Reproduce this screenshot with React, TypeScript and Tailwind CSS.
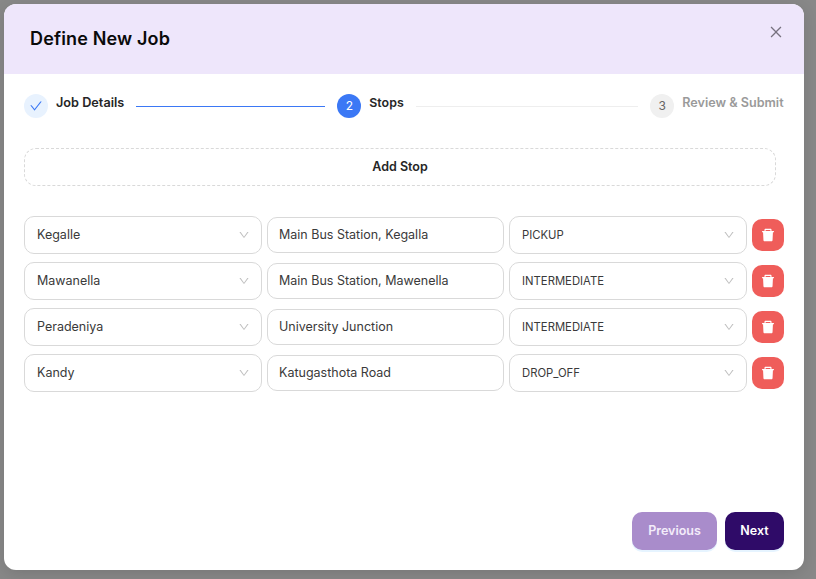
import React from "react";
import { AiFillDelete, AiOutlineCheck, AiOutlineClose, AiOutlineDown } from "react-icons/ai";

const font = "font-['Inter','Noto_Sans',sans-serif]";

const rows = [
  ["Kegalle", "Main Bus Station, Kegalla", "PICKUP"],
  ["Mawanella", "Main Bus Station, Mawenella", "INTERMEDIATE"],
  ["Peradeniya", "University Junction", "INTERMEDIATE"],
  ["Kandy", "Katugasthota Road", "DROP_OFF"],
];

function Select({ value, upper }: { value: string; upper?: boolean }) {
  return (
    <div
      className={`flex h-[38px] w-[238px] shrink-0 items-center justify-between rounded-[10px] border border-[#d9d9d9] bg-white pl-3 pr-[11px] text-[#3a3a3a] ${
        upper ? "text-[11.3px] leading-[20px]" : "text-[12.5px]"
      }`}
    >
      <span>{value}</span>
      <AiOutlineDown className="h-3 w-3 text-[#bfbfbf]" />
    </div>
  );
}

function Row({ row }: { row: string[] }) {
  return (
    <div className="flex h-[38px] items-center gap-[5px]">
      <Select value={row[0]} />
      <div className="flex h-9 w-[237px] shrink-0 items-center rounded-[10px] border border-[#d9d9d9] bg-white px-[11px] text-[12.5px] text-[#3a3a3a]">
        {row[1]}
      </div>
      <Select value={row[2]} upper />
      <button className="flex h-8 w-8 shrink-0 items-center justify-center rounded-[10px] bg-[#ef5d5a] text-white">
        <AiFillDelete className="h-4 w-4" />
      </button>
    </div>
  );
}

export default function App() {
  return (
    <div className={`${font} min-h-[579px] bg-[#888888] pl-1 pt-1`}>
      <div className="relative flex h-[566px] w-[800px] flex-col overflow-hidden rounded-xl bg-white shadow-[0_4px_16px_rgba(0,0,0,0.12)]">
        <header className="flex h-[70px] shrink-0 items-center bg-[#eee6fb] pb-px pl-[26px]">
          <h1 className="text-[18px] font-semibold tracking-[0.15px] text-[#0a0a0a]">Define New Job</h1>
        </header>
        <button className="absolute right-5 top-5 text-[#77727f]">
          <AiOutlineClose className="h-4 w-4" />
        </button>

        <div className="flex flex-1 flex-col px-5 pt-5">
          <div className="flex h-6 items-start">
            <div className="flex h-6 w-6 items-center justify-center rounded-full bg-[#e8f2fe] text-[#3b78f5]">
              <AiOutlineCheck className="h-3.5 w-3.5" />
            </div>
            <span className="ml-2 text-[12.7px] font-semibold leading-[18px] text-[#262626]">Job Details</span>
            <div className="ml-3 mr-3 mt-3 h-px w-[189px] bg-[#3b78f5]" />
            <div className="flex h-6 w-6 items-center justify-center rounded-full bg-[#3b78f5] text-[12px] text-white">2</div>
            <span className="ml-2 w-[34px] text-[12.4px] font-semibold leading-[18px] text-[#262626]">Stops</span>
            <div className="ml-[13px] mr-3 mt-3 h-px w-[222px] bg-[#eeeeee]" />
            <div className="flex h-6 w-6 items-center justify-center rounded-full bg-[#f0f0f0] text-[12px] text-[#666]">3</div>
            <span className="ml-2 whitespace-nowrap text-[12.6px] font-semibold leading-[18px] text-[#9a9a9a]">Review &amp; Submit</span>
          </div>

          <button className="mt-[30px] h-[38px] w-[752px] rounded-xl border border-dashed border-[#d9d9d9] bg-white text-[12.5px] font-semibold text-[#262626]">
            Add Stop
          </button>

          <div className="mt-[30px] flex flex-col gap-2">
            {rows.map((r) => (
              <Row key={r[0]} row={r} />
            ))}
          </div>

          <div className="mt-auto flex justify-end gap-2 pb-5">
            <button className="h-[38px] w-[85px] rounded-[10px] bg-[#a98ccb] text-[12.5px] font-semibold text-[#f3ecfa] shadow-[0_2px_0_rgba(5,145,255,0.1)]">
              Previous
            </button>
            <button className="h-[38px] w-[59px] rounded-[10px] bg-[#2f0b68] text-[12.5px] font-semibold text-white shadow-[0_2px_0_rgba(5,145,255,0.1)]">
              Next
            </button>
          </div>
        </div>
      </div>
    </div>
  );
}
